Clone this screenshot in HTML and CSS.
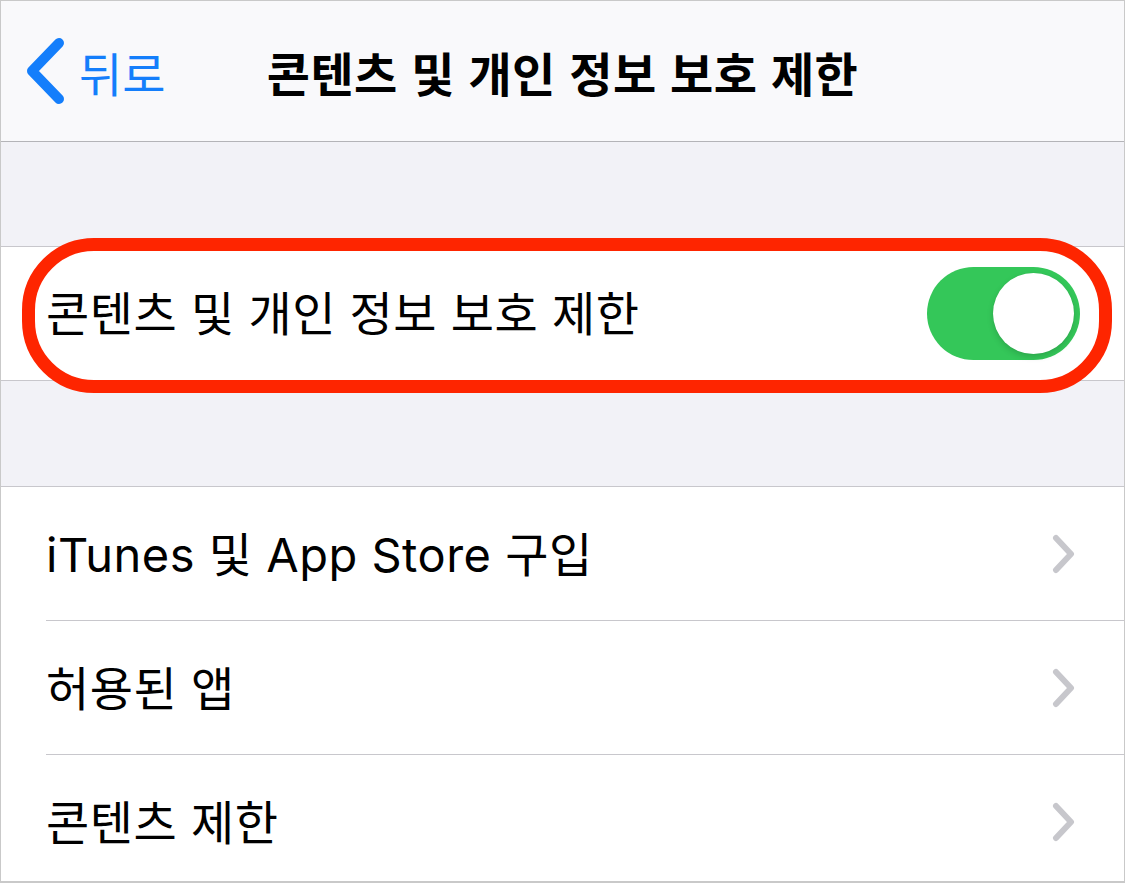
FILE: index.html
```html
<!DOCTYPE html>
<html lang="ko">
<head>
<meta charset="utf-8">
<link rel="stylesheet" href="styles.css">
</head>
<body>
<div class="frame">
  <header class="nav">
    <div class="back">
      <svg class="back-icon" width="40" height="66" viewBox="0 0 40 66"><path d="M33 5 L6 33 L33 61" fill="none" stroke="#147efb" stroke-width="10" stroke-linecap="round" stroke-linejoin="round"/></svg>
      <span class="back-label">뒤로</span>
    </div>
    <h1 class="title">콘텐츠 및 개인 정보 보호 제한</h1>
  </header>
  <div class="gap gap-top"></div>
  <section class="group">
    <div class="row row-toggle">
      <span class="label">콘텐츠 및 개인 정보 보호 제한</span>
      <span class="switch"><span class="knob"></span></span>
    </div>
    <div class="highlight"></div>
  </section>
  <div class="gap gap-mid"></div>
  <section class="group list">
    <div class="row row-link"><span class="label">iTunes 및 App Store 구입</span><svg class="chev" width="24" height="40" viewBox="0 0 24 40"><path d="M4 4 L19 20 L4 36" fill="none" stroke="#c7c7cc" stroke-width="6" stroke-linecap="round" stroke-linejoin="round"/></svg></div>
    <div class="row row-link"><span class="label">허용된 앱</span><svg class="chev" width="24" height="40" viewBox="0 0 24 40"><path d="M4 4 L19 20 L4 36" fill="none" stroke="#c7c7cc" stroke-width="6" stroke-linecap="round" stroke-linejoin="round"/></svg></div>
    <div class="row row-link last"><span class="label">콘텐츠 제한</span><svg class="chev" width="24" height="40" viewBox="0 0 24 40"><path d="M4 4 L19 20 L4 36" fill="none" stroke="#c7c7cc" stroke-width="6" stroke-linecap="round" stroke-linejoin="round"/></svg></div>
  </section>
</div>
</body>
</html>
```
FILE: styles.css
```css
* { box-sizing: border-box; }
html, body { margin: 0; padding: 0; background: #fff; }
body {
  font-family: "Inter", "Noto Sans CJK KR", sans-serif;
  color: #000;
}
.frame {
  width: 1125px;
  height: 883px;
  border: 1px solid #c9c9c9;
  border-bottom-width: 2px;
  background: #fff;
  overflow: hidden;
  position: relative;
  display: flex;
  flex-direction: column;
}
.nav {
  height: 141px;
  flex: none;
  background: #f9f9fb;
  border-bottom: 1px solid #b4b4b8;
  position: relative;
  display: flex;
  align-items: center;
}
.back {
  display: flex;
  align-items: center;
  padding-left: 25px;
  gap: 13px;
  color: #147efb;
}
.back-icon { display: block; }
.back-label {
  font-size: 47px;
  font-family: "Noto Sans CJK KR", sans-serif;
  line-height: 1;
}
.title {
  position: absolute;
  left: 0;
  right: 0;
  top: 0;
  bottom: 0;
  margin: 0;
  display: flex;
  align-items: center;
  justify-content: center;
  font-size: 47px;
  font-weight: 700;
  font-family: "Noto Sans CJK KR", sans-serif;
  letter-spacing: 0.4px;
  pointer-events: none;
}
.gap {
  flex: none;
  background: #f2f2f7;
  border-bottom: 1px solid #c8c7cc;
}
.gap-top { height: 105px; }
.gap-mid { height: 107px; border-top: 1px solid #c8c7cc; }
.group { position: relative; background: #fff; }
.row {
  display: flex;
  align-items: center;
  justify-content: space-between;
  padding-left: 45px;
}
.row-toggle {
  height: 133px;
  padding-right: 44px;
}
.label {
  font-size: 47px;
  letter-spacing: 0.5px;
  line-height: 1;
}
.switch {
  width: 153px;
  height: 93px;
  border-radius: 47px;
  background: #34c759;
  position: relative;
  flex: none;
}
.knob {
  position: absolute;
  right: 6px;
  top: 6px;
  width: 81px;
  height: 81px;
  border-radius: 50%;
  background: #fff;
  box-shadow: 0 3px 6px rgba(0,0,0,0.15), 0 0 0 0.5px rgba(0,0,0,0.04);
}
.highlight {
  position: absolute;
  left: 21px;
  top: -9px;
  width: 1090px;
  height: 155px;
  border: 13px solid #fe2500;
  border-radius: 72px;
  pointer-events: none;
}
.row-link {
  height: 134px;
  padding-right: 48px;
  position: relative;
}
.row-link::after {
  content: "";
  position: absolute;
  left: 45px;
  right: 0;
  bottom: 0;
  height: 1px;
  background: #c8c7cc;
}
.row-link.last::after { display: none; }
.chev { display: block; flex: none; }
```
